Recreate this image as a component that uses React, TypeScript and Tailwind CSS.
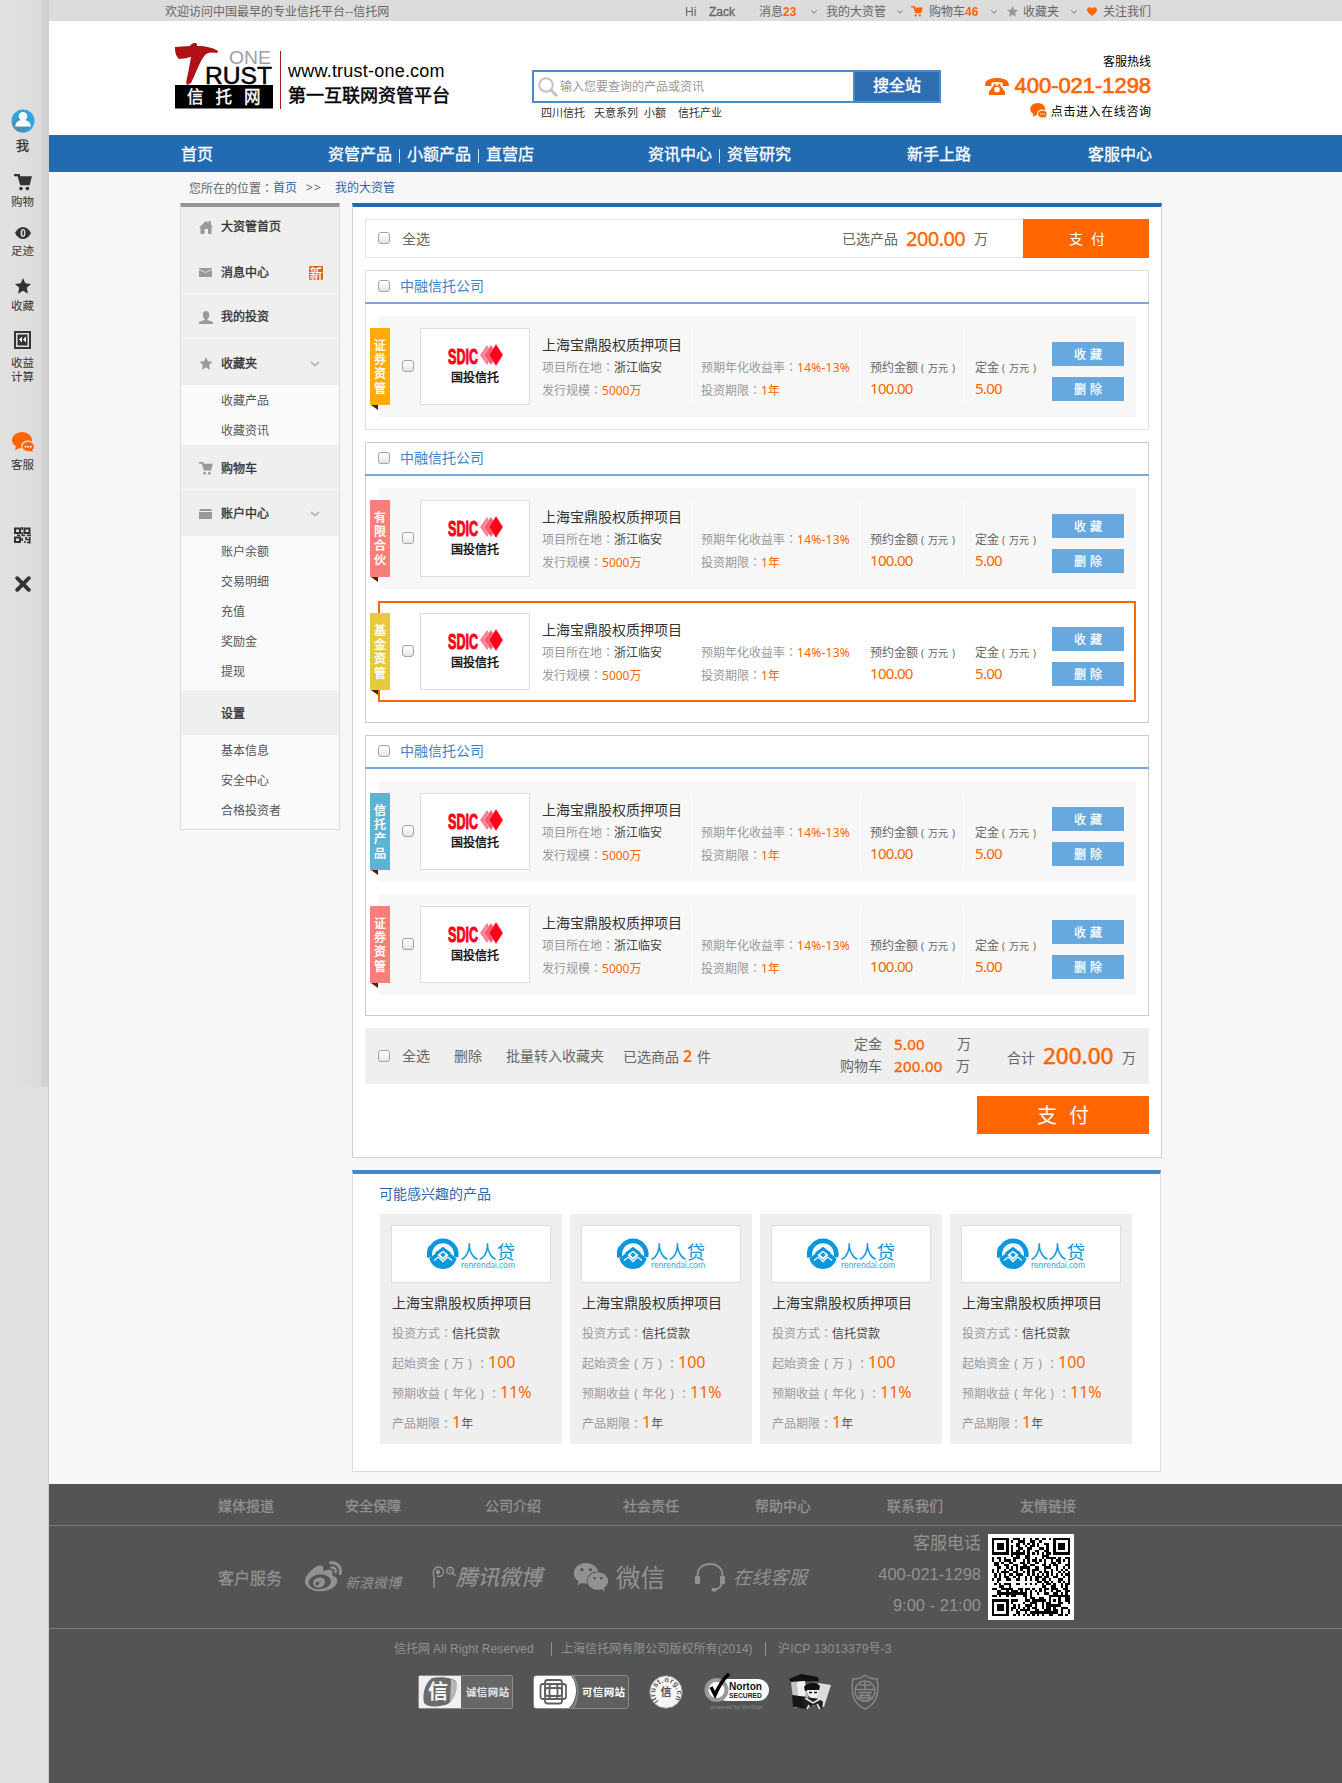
import React from "react";
import { FaWeibo, FaWeixin } from "react-icons/fa";

const Colon = () => <span className="font-['Noto_Sans_CJK_TC',sans-serif]">：</span>;

const CartIcon = ({ className }: { className: string }) => (
  <svg viewBox="0 0 18 17" className={className} fill="currentColor">
    <path d="M0 0h6v2.2h12l-2.4 9H6.2L3.6 2.2H0z" />
    <circle cx="7" cy="14.6" r="1.8" />
    <circle cx="13.4" cy="14.6" r="1.8" />
  </svg>
);

const StarIcon = ({ className }: { className: string }) => (
  <svg viewBox="0 0 16 16" className={className} fill="currentColor">
    <path d="M8 0l2.3 5.3 5.7.6-4.2 3.9 1.2 5.9L8 12.7l-5 3 1.2-5.9L0 5.900l5.700-.6z" />
  </svg>
);

const ChatIcon = ({ className }: { className: string }) => (
  <svg viewBox="0 0 22 20" className={className}>
    <path fill="#ff6600" d="M10 0c5.700 0 10 3.700 10 8.300l-.1 1.500C18.900 9 17.500 8.600 16 8.600c-3.600 0-6.800 2.300-6.800 5.600l.1 2.200-2.100-.2-4 2 .6-3.900C1.500 12.700 0 10.700 0 8.300 0 3.700 4.400 0 10 0z" />
    <path fill="#ff6600" d="M16.200 10c3.300 0 5.800 2 5.800 4.600 0 1.400-.7 2.600-1.700 3.400l.3 2-2.300-.9c-4.400.9-7.900-1.400-7.900-4.500 0-2.600 2.500-4.600 5.800-4.600z" />
    <path stroke="#fff" strokeWidth="1.500" strokeDasharray="1.700 .9" d="M12.800 14.700h7" />
  </svg>
);

const Chevron = () => (
  <svg viewBox="0 0 6 4" className="h-1 w-1.5" fill="none" stroke="#777" strokeWidth="1">
    <path d="M.5.5L3 3.200 5.500.5" />
  </svg>
);

const Check = ({ className = "" }: { className?: string }) => (
  <span className={"block h-3 w-3 shrink-0 rounded-[3px] border border-[#a3a3a3] bg-linear-to-b from-white via-[#f4f4f4] to-[#e4e4e4] " + className} />
);

/* ---------- Left tool strip ---------- */

const Strip = () => (
  <aside className="flex w-[49px] shrink-0 flex-col bg-[#e0e0e0]">
    <div className="flex h-[1087px] flex-col bg-[linear-gradient(to_right,#e2e2e2_0%,#dcdcdc_80%,#d4d4d4_86%,#cfcfcf_100%)] text-[11.500px] leading-[14px] text-[#333]">
      <div className="flex w-[45px] flex-col items-center pt-[109px]">
        <svg viewBox="0 0 24 24" className="h-6 w-6">
          <circle cx="12" cy="12" r="11.500" fill="#2fa5dd" />
          <path d="M1 14l9-8 8 12-5 5.400C7 23.700 2 20 1 14z" fill="#4790bd" />
          <circle cx="12" cy="7.200" r="4.300" fill="#fff" />
          <path d="M4.300 17.500c0-4 2.600-6.500 7.700-6.500s7.700 2.500 7.700 6.500z" fill="#fff" />
        </svg>
        <span className="mt-[5px] text-[13px] [-webkit-text-stroke:0.300px_#333]">我</span>
        <CartIcon className="mt-[22px] h-[17px] w-[18px]" />
        <span className="mt-1">购物</span>
        <svg viewBox="0 0 16 12" className="mt-[18px] h-3 w-4">
          <path d="M0 6c2-4 5-6 8-6s6 2 8 6c-2 4-5 6-8 6S2 10 0 6z" fill="#333" />
          <ellipse cx="8" cy="6" rx="2.400" ry="4" fill="#e0e0e0" />
          <ellipse cx="8.200" cy="6" rx=".9" ry="3" fill="#333" />
        </svg>
        <span className="mt-[5px]">足迹</span>
        <StarIcon className="mt-5 h-4 w-4" />
        <span className="mt-[5px]">收藏</span>
        <svg viewBox="0 0 17 18" className="mt-[18px] h-[18px] w-[17px]">
          <path d="M1 1h15v16H1z" fill="none" stroke="#333" strokeWidth="2" />
          <path d="M3.500 3.500h10v11h-10z" fill="#333" />
          <path d="M8 5.500v6L5 8.500zM12 5.500v6l-3-3z" fill="#fff" />
        </svg>
        <span className="mt-[7px]">收益</span>
        <span>计算</span>
        <ChatIcon className="mt-[48px] h-5 w-[22px]" />
        <span className="mt-[6px]">客服</span>
        <svg viewBox="0 0 17 17" className="mt-[55px] h-[17px] w-[17px]" fill="none" stroke="#333" strokeWidth="2">
          <path d="M1 1.500h5v4.500H1zM10.500 1.500h5v4.500h-5zM1 10.500h5v4.500H1z" />
          <path d="M8.200 0v3M8.200 5v3.500h3M8.200 11v3M3 8.300h3M13 8.300h4M10 15h2M12 10v3M15.700 10v6.500M12 12.500h4M13 15.500h3" strokeWidth="1.700" />
        </svg>
        <svg viewBox="0 0 16 16" className="mt-8 h-4 w-4" stroke="#333" strokeWidth="3.800" strokeLinecap="round">
          <path d="M2.200 2.200l11.600 11.600M13.800 2.200L2.200 13.800" />
        </svg>
      </div>
    </div>
    <div className="flex-1 border-r border-[#cfcfcf]" />
  </aside>
);

/* ---------- Header ---------- */

const TopBar = () => (
  <div className="flex h-[21px] items-center bg-[#dcdcdc] pl-[116px] text-xs leading-[20px] text-[#666]">
    <span className="w-[520px] font-['Noto_Sans_CJK_SC',sans-serif]">欢迎访问中国最早的专业信托平台--信托网</span>
    <div className="flex items-center whitespace-nowrap pt-0.5 font-['Liberation_Sans','Noto_Sans_CJK_SC',sans-serif]">
      <span className="w-6">Hi</span>
      <span className="w-[50px] [-webkit-text-stroke:0.300px_#666]">Zack</span>
      <span className="w-[52px]">消息<b className="text-[#ff6600]">23</b></span>
      <span className="w-[15px]"><Chevron /></span>
      <span className="w-[71px]">我的大资管</span>
      <span className="w-3.5"><Chevron /></span>
      <CartIcon className="mr-1.5 h-[11px] w-3 text-[#ff6600]" />
      <span className="w-[62px]">购物车<b className="text-[#ff6600]">46</b></span>
      <span className="w-4"><Chevron /></span>
      <StarIcon className="mr-[5px] h-[11px] w-[11px] text-[#999]" />
      <span className="w-[48px]">收藏夹</span>
      <span className="w-4"><Chevron /></span>
      <svg viewBox="0 0 10 9" className="mr-[6px] h-[9px] w-2.5" fill="#ff6600">
        <path d="M5 9C2 6.500 0 5 0 2.600 0 0 3.500-.8 5 1.500 6.500-.8 10 0 10 2.600 10 5 8 6.500 5 9z" />
      </svg>
      <span>关注我们</span>
    </div>
  </div>
);

const Logo = () => (
  <svg viewBox="0 0 98 66" className="h-[66px] w-[98px] font-['Liberation_Sans','Noto_Sans_CJK_SC',sans-serif]">
    <path d="M0 4l15-1c2-3 5-4 7-2v2c9 0 17 2 21 5l-1 2c-5-1-9-1-12 2-5 6-9 18-14 28l-4 2c-1-2-1-3 0-7 2-9 3-16 4-21-5 1-9 2-12 2C1 13 0 10 0 4z" fill="#b01116" />
    <text x="54" y="20.500" fontSize="18" textLength="42" lengthAdjust="spacingAndGlyphs" fill="#a0a0a0">ONE</text>
    <text x="30" y="40.500" fontSize="24" textLength="67" lengthAdjust="spacingAndGlyphs" fill="#000" stroke="#000" strokeWidth=".5">RUST</text>
    <path d="M0 42h98v23.500H0z" fill="#000" />
    <text x="12" y="59.500" fontSize="16.500" letterSpacing="12" fill="#fff" stroke="#fff" strokeWidth=".4">信托网</text>
  </svg>
);

const Header = () => (
  <header className="flex h-[114px] items-start whitespace-nowrap bg-white">
    <div className="ml-[126px] mt-[22px]"><Logo /></div>
    <div className="ml-[7px] mt-[30px] h-[58px] w-px bg-[#a61c1c]" />
    <div className="ml-[7px] mt-[38px] w-[244px] font-['Liberation_Sans','Noto_Sans_CJK_SC',sans-serif] text-black">
      <div className="text-[18px] leading-6 tracking-[0.220px]">www.trust-one.com</div>
      <div className="text-[18px] leading-[26px] [-webkit-text-stroke:0.500px_#000]">第一互联网资管平台</div>
    </div>
    <div className="mt-[49px] w-[409px]">
      <div className="flex h-[33px] border-2 border-[#4c8bc9]">
        <div className="flex flex-1 items-center pl-1">
          <svg viewBox="0 0 20 20" className="h-5 w-5" fill="none" stroke="#c4c4c4">
            <circle cx="8" cy="8" r="6.800" strokeWidth="2" />
            <path d="M13 13l6 6" strokeWidth="3" />
          </svg>
          <span className="ml-0.5 text-xs text-[#999]">输入您要查询的产品或资讯</span>
        </div>
        <div className="flex w-[86px] items-center justify-center border-l-2 border-[#4c8bc9] bg-[#2f6db1] pb-1 text-base text-white [-webkit-text-stroke:0.400px_#fff]">搜全站</div>
      </div>
      <div className="flex whitespace-pre pl-[9px] text-[11px] leading-5 text-[#333]">
        <span className="w-[53px]">四川信托</span>
        <span className="w-[50px]">天意系列</span>
        <span className="w-[34px]">小额</span>
        <span>信托产业</span>
      </div>
    </div>
    <div className="mt-[32px] ml-[43px] flex w-[167px] flex-col items-end text-xs leading-[18px] text-black">
      <span>客服热线</span>
      <div className="mt-0.5 flex items-center text-[#ff6600]">
        <svg viewBox="0 0 25 18" className="mr-[6px] h-[17px] w-6 shrink-0" fill="#ff6600">
          <path d="M0 6.500C0 2.500 5 0 12.500 0S25 2.500 25 6.500V8.500h-6.500V5C15 4 10 4 6.500 5v3.500H0z" />
          <path fillRule="evenodd" d="M9 6h1.800v2h3.400V6H16v2l5 6.500V18H4v-3.500L9 8zM12.500 9.200a3 3 0 100 6 3 3 0 000-6z" />
        </svg>
        <span className="font-['Liberation_Sans',sans-serif] text-[22px] leading-[26px] tracking-[-0.050px] [-webkit-text-stroke:0.700px_#ff6600]">400-021-1298</span>
      </div>
      <div className="mt-1 flex items-center">
        <ChatIcon className="mr-1 -mt-1 h-[15px] w-[17px]" />
        <span className="-mr-[0.600px] tracking-[0.600px]">点击进入在线咨询</span>
      </div>
    </div>
  </header>
);

const Bar = () => <i className="mx-[7px] mt-1 h-3.5 w-px bg-[#d7e4f1]" />;

const Nav = () => (
  <nav className="flex h-[37px] items-center whitespace-nowrap bg-[#236bb1] pl-[132px] text-base leading-none text-white [-webkit-text-stroke:0.300px_#fff]">
    <span className="w-[147px]">首页</span>
    <div className="flex w-[320px] items-center">资管产品<Bar />小额产品<Bar />直营店</div>
    <div className="flex w-[259px] items-center">资讯中心<Bar />资管研究</div>
    <span className="w-[181px]">新手上路</span>
    <span>客服中心</span>
  </nav>
);

/* ---------- Sidebar ---------- */

const DownArrow = () => (
  <svg viewBox="0 0 10 6" className="mr-[19px] ml-auto h-1.5 w-2.5" fill="none" stroke="#bbb" strokeWidth="2">
    <path d="M1 1l4 3.500L9 1" />
  </svg>
);

const MenuHead = ({ icon, label, tail, className }: { icon?: React.ReactNode; label: string; tail?: React.ReactNode; className: string }) => (
  <div className={"flex items-center bg-[#efefef] pl-[18px] text-xs text-[#333] [-webkit-text-stroke:0.350px_#333] " + className}>
    <span className="w-[22px] text-[#999]">{icon}</span>
    <span>{label}</span>
    {tail}
  </div>
);

const Sub = ({ items, className }: { items: string[]; className: string }) => (
  <div className={"flex flex-col bg-[#fafafa] pl-10 text-xs leading-[30px] text-[#555] " + className}>
    {items.map((t) => <span key={t}>{t}</span>)}
  </div>
);

const Sidebar = () => (
  <aside className="h-[627px] w-40 shrink-0 border border-t-4 border-[#dcdcdc] border-t-[#969696] bg-[#efefef]">
    <MenuHead className="h-10" label="大资管首页" icon={<svg viewBox="0 0 14 14" className="h-3.5 w-3.5" fill="currentColor"><path d="M7 1l2.500 2V1H12v4l2 2.500h-1.500V14H9V9H5.500v5H1.500V7.500H0z" /></svg>} />
    <MenuHead className="h-[47px] border-b border-[#f8f8f8] pt-1.5" label="消息中心" icon={<svg viewBox="0 0 13 9" className="-mt-0.5 h-[9px] w-[13px]" fill="currentColor"><path d="M0 0h13v9H0z" /><path d="M0 1.500L6.500 4.500 13 1.500" fill="none" stroke="#ddd" /></svg>}
      tail={<span className="mr-4 ml-auto flex h-3.5 w-3.5 items-center justify-center rounded-[1px] bg-[#e06416] text-[13px] leading-none text-white [-webkit-text-stroke:0.200px_#fff]">新</span>} />
    <MenuHead className="h-[45px] border-b border-[#f8f8f8] pt-0.5" label="我的投资" icon={<svg viewBox="0 0 14 13" className="h-[13px] w-3.5" fill="currentColor"><ellipse cx="7" cy="4" rx="3.200" ry="4" /><path d="M5.500 7h3v2l5.500 2v2H0v-2l5.500-2z" /></svg>} />
    <MenuHead className="h-[46px] pt-[3px]" label="收藏夹" icon={<StarIcon className="h-[13px] w-3.5" />} tail={<DownArrow />} />
    <Sub className="h-[60px] pt-px" items={["收藏产品", "收藏资讯"]} />
    <MenuHead className="h-[45px] border-b border-[#f8f8f8] pt-[3px]" label="购物车" icon={<CartIcon className="-mt-px h-[13px] w-3.5" />} />
    <MenuHead className="h-[46px] pt-0.5" label="账户中心" icon={<svg viewBox="0 0 13 10" className="h-2.5 w-[13px]" fill="currentColor"><path d="M1 0h11l1 2H0zM0 3h13v7H0z" /></svg>} tail={<DownArrow />} />
    <Sub className="h-[154px] pt-px" items={["账户余额", "交易明细", "充值", "奖励金", "提现"]} />
    <MenuHead className="h-[45px] pt-0.5" label="设置" />
    <Sub className="h-[94px] pt-px" items={["基本信息", "安全中心", "合格投资者"]} />
  </aside>
);

/* ---------- Cart ---------- */

const SdicLogo = () => (
  <div className="flex flex-col items-center text-black">
    <svg viewBox="0 -4 56 30" className="h-[30px] w-14 font-['Liberation_Sans',sans-serif]">
      <text x="1" y="19.500" fontSize="22" fontWeight="700" textLength="30" lengthAdjust="spacingAndGlyphs" fill="#ff0019" stroke="#ff0019" strokeWidth="1">SDIC</text>
      <path d="M40 1l6.500 10-6.500 10-7-10z" fill="#ff8195" />
      <path d="M44 1l6.500 10-6.500 10-7-10z" fill="#ff5570" stroke="#ffc9d1" strokeWidth=".5" />
      <path d="M49 0l7 11-7 11-7-11z" fill="#ff0019" stroke="#ffc9d1" strokeWidth=".4" />
    </svg>
    <span className="text-xs leading-4 [-webkit-text-stroke:0.400px_#111]">国投信托</span>
  </div>
);

const BlueButton = ({ a, b }: { a: string; b: string }) => (
  <div className="flex h-6 w-[72px] items-center justify-center gap-1 bg-[#67a8de] pt-0.5 text-xs leading-none text-white [-webkit-text-stroke:0.250px_#fff]">
    <span>{a}</span><span>{b}</span>
  </div>
);

const Unit = () => <span className="ml-[3px] flex w-[34px] justify-between text-[10px]"><span>(</span><span>万元</span><span>)</span></span>;

const Split = () => <div className="mt-3 h-[77px] w-px bg-white" />;

const Product = ({ tag, color, active }: { tag: string; color: string; active?: boolean }) => (
  <div className={"relative mx-3 flex h-[101px] items-start whitespace-nowrap text-xs text-[#999] " + (active ? "bg-white ring-2 ring-[#ff6600] ring-inset" : "bg-[#f7f7f7]")}>
    <div className="absolute top-3 -left-2">
      <div className={"flex h-[77px] w-5 flex-col items-center pt-[11px] text-xs leading-[14.200px] text-white [-webkit-text-stroke:0.400px_#fff] " + color}>
        {tag.split("").map((c) => <span key={c}>{c}</span>)}
      </div>
      <svg viewBox="0 0 8 5" className="h-[5px] w-2" fill="#4c2500"><path d="M1 0h7v5z" /></svg>
    </div>
    <Check className="mt-11 ml-6" />
    <div className="mt-3 ml-1.5 flex h-[77px] w-[110px] items-start justify-center border border-[#ddd] bg-white pt-[11px]"><SdicLogo /></div>
    <div className="ml-3 w-[149px] pt-[18px]">
      <div className="text-sm leading-[22px] text-[#333]">上海宝鼎股权质押项目</div>
      <div className="leading-[22px]">项目所在地<Colon /><span className="text-[#444]">浙江临安</span></div>
      <div className="leading-[22px]">发行规模<Colon /><span className="text-[#ff6600]">5000万</span></div>
    </div>
    <Split />
    <div className="ml-[9px] w-[159px] pt-10">
      <div className="leading-[22px]">预期年化收益率<Colon /><span className="tracking-[0.250px] text-[#ff6600]">14%-13%</span></div>
      <div className="leading-[22px]">投资期限<Colon /><span className="text-[#ff6600]">1年</span></div>
    </div>
    <Split />
    <div className="ml-[9px] w-[93px] pt-10 text-[#666]">
      <div className="flex leading-6">预约金额<Unit /></div>
      <div className="text-[15px] leading-4 tracking-[-0.700px] text-[#ff6600]">100.00</div>
    </div>
    <Split />
    <div className="ml-[11px] w-[77px] pt-10 text-[#666]">
      <div className="flex leading-6">定金<Unit /></div>
      <div className="text-[15px] leading-4 tracking-[-0.700px] text-[#ff6600]">5.00</div>
    </div>
    <div className="mt-[26px] flex flex-col gap-[11px]">
      <BlueButton a="收" b="藏" />
      <BlueButton a="删" b="除" />
    </div>
  </div>
);

const Group = ({ className, children }: { className: string; children: React.ReactNode }) => (
  <section className={"mt-3 border " + className}>
    <div className="-mx-px flex h-[33px] items-center border-b-2 border-[#79a8dc] pl-[13px]">
      <Check className="-mt-px" />
      <span className="ml-2.5 pb-0.5 text-sm leading-none text-[#3b86cc]">中融信托公司</span>
    </div>
    <div className="mt-3 flex flex-col gap-3">{children}</div>
  </section>
);

const Cart = () => (
  <main className="h-[955px] w-[810px] border border-t-4 border-[#d0d0d0] border-t-[#236bb1] bg-white px-3 pt-3 text-[#666]">
    <div className="flex h-[39px] w-[784px] items-center border border-[#e3e3e3] pl-3 text-sm leading-none">
      <Check className="-mt-0.5" />
      <span className="ml-3 w-[440px]">全选</span>
      <span className="pt-px">已选产品</span>
      <span className="ml-2 w-[68px] text-[20px] tracking-[-0.550px] text-[#ff6600] [-webkit-text-stroke:0.300px_#ff6600]">200.00</span>
      <span className="pt-px">万</span>
      <div className="-my-px -mr-px ml-auto flex h-[39px] w-[126px] items-center justify-center gap-2 bg-[#ff6600] pt-px pl-0.5 text-sm text-white"><span>支</span><span>付</span></div>
    </div>
    <div className="w-[784px]">
      <Group className="h-40 border-[#e0e0e0]">
        <Product tag="证券资管" color="bg-[#ffab0a]" />
      </Group>
      <Group className="h-[281px] border-[#cccccc]">
        <Product tag="有限合伙" color="bg-[#f77e7b]" />
        <Product tag="基金资管" color="bg-[#e6ca3b]" active />
      </Group>
      <Group className="h-[281px] border-[#cccccc]">
        <Product tag="信托产品" color="bg-[#5cb3d3]" />
        <Product tag="证券资管" color="bg-[#f77e7b]" />
      </Group>
    </div>
    <div className="mt-3 flex h-14 w-[784px] items-center whitespace-nowrap bg-[#efefef] pl-[13px] text-sm leading-none">
      <Check />
      <span className="ml-3 w-[52px]">全选</span>
      <span className="w-[52px]">删除</span>
      <span className="w-[117px]">批量转入收藏夹</span>
      <span className="pt-0.5">已选商品</span>
      <b className="ml-1 w-3.5 text-base font-semibold text-[#ff6600]">2</b>
      <span className="pt-0.5">件</span>
      <div className="-mt-0.5 ml-[129px] w-[42px] text-right leading-[22px]"><div>定金</div><div>购物车</div></div>
      <div className="-mt-0.5 ml-3 w-[62px] text-[15px] leading-[22px] tracking-[0.300px] text-[#ff6600] [-webkit-text-stroke:0.400px_#ff6600]"><div>5.00</div><div>200.00</div></div>
      <div className="-mt-0.5 w-[51px] leading-[22px]"><div className="pl-px">万</div><div>万</div></div>
      <span className="pt-1">合计</span>
      <span className="ml-2 w-[79px] text-[22.500px] text-[#ff6600] [-webkit-text-stroke:0.600px_#ff6600]">200.00</span>
      <span className="pt-1">万</span>
    </div>
    <div className="mt-3 ml-[612px] flex h-[38px] w-[172px] items-center justify-center gap-3 bg-[#ff6600] pt-0.5 text-xl leading-none text-white"><span>支</span><span>付</span></div>
  </main>
);

/* ---------- Suggestions ---------- */

const RenrenLogo = () => (
  <svg viewBox="0 0 90 36" className="h-9 w-[90px]">
    <path d="M2.600 19.500A13.700 13.700 0 0 1 4 9M3 19a13.300 13.300 0 1 1 26 0" fill="none" stroke="#0b97dd" strokeWidth="4.600" />
    <path d="M2.300 20.500l6.500-5.300 7.200 6.700 7.200-6.700 6.500 5.300c-2 6.500-7.200 10.500-13.700 10.500S4.300 27 2.300 20.500z" fill="#0b97dd" />
    <path d="M8 14.800l8-6 8 6-2 2.400-6-4.400-6 4.400z" fill="#0b97dd" />
    <path d="M16 14.200l2.800 2.600-2.800 2.600-2.800-2.600z" fill="#0b97dd" />
    <path d="M7 22.500l4.300-3.500 4.700 4.600 4.700-4.600 4.300 3.500" fill="none" stroke="#fff" strokeWidth="1.200" />
    <text x="33" y="20.500" fontSize="18.500" textLength="55" lengthAdjust="spacingAndGlyphs" fill="#0b97dd" className="font-['Noto_Sans_CJK_SC',sans-serif]">人人贷</text>
    <text x="34" y="29.500" fontSize="8.500" textLength="54" lengthAdjust="spacingAndGlyphs" fill="#35a9e2" className="font-['Lato',sans-serif]">renrendai.com</text>
  </svg>
);

const Card = () => (
  <div className="h-[230px] w-[182px] bg-[#efefef] pt-[11px] pl-[11px] text-xs text-[#999]">
    <div className="flex h-[58px] w-40 items-center justify-center border border-[#ddd] bg-white pt-1 pl-px"><RenrenLogo /></div>
    <div className="mt-1.5 pl-px">
      <div className="text-sm leading-7 text-[#333]">上海宝鼎股权质押项目</div>
      <div className="mt-px leading-[30px]">投资方式<Colon /><span className="text-[#444]">信托贷款</span></div>
      <div className="flex h-[30px] items-center leading-[30px]">起始资金<span className="w-3 text-center">(</span>万<span className="w-3 text-center">)</span><Colon /><span className="-mt-1 text-base text-[#ff6600]">100</span></div>
      <div className="flex h-[30px] items-center leading-[30px]">预期收益<span className="w-3 text-center">(</span>年化<span className="w-3 text-center">)</span><Colon /><span className="-mt-1 text-base text-[#ff6600]">11%</span></div>
      <div className="flex h-[30px] items-center leading-[30px]">产品期限<Colon /><span className="-mt-1 text-base text-[#ff6600]">1</span><span className="text-[#555]">年</span></div>
    </div>
  </div>
);

const Suggestions = () => (
  <section className="mt-3 h-[302px] w-[809px] border border-t-4 border-[#dcdcdc] border-t-[#3f88ce] bg-white pl-[27px]">
    <div className="-ml-px h-10 pt-2.5 text-sm leading-5 text-[#2a68b0]">可能感兴趣的产品</div>
    <div className="flex gap-2"><Card /><Card /><Card /><Card /></div>
  </section>
);

/* ---------- Footer ---------- */

const QR = () => {
  const n = 33;
  const cells: string[] = [];
  const finder = (x: number, y: number, ox: number, oy: number) => {
    const d = Math.max(Math.abs(x - ox - 3), Math.abs(y - oy - 3));
    return d <= 4 ? (d === 3 || d <= 1 ? 1 : 0) : -1;
  };
  let seed = 20141;
  for (let y = 0; y < n; y++)
    for (let x = 0; x < n; x++) {
      seed = (seed * 1103515245 + 12345) % 2147483648;
      let v = (seed >> 12) & 1;
      for (const [ox, oy] of [[0, 0], [26, 0], [0, 26]]) {
        const f = finder(x, y, ox, oy);
        if (f >= 0) v = f;
      }
      const a = Math.max(Math.abs(x - 26), Math.abs(y - 26));
      if (a <= 2) v = a === 1 ? 0 : 1;
      if (v) cells.push(`M${x} ${y}h1v1h-1z`);
    }
  return (
    <svg viewBox="-1.700 -1.700 36.400 36.400" className="h-[86px] w-[86px] bg-white" fill="#000" shapeRendering="crispEdges">
      <path d={cells.join("")} />
    </svg>
  );
};

const Badges = () => (
  <div className="mt-0.5 ml-[369px] flex h-[38px] items-center font-['Noto_Sans_CJK_SC',sans-serif]">
    <svg viewBox="0 0 95 34" className="h-[34px] w-[95px]">
      <rect x=".5" y=".5" width="94" height="33" rx="1.500" fill="#666" stroke="#8c8c8c" />
      <path d="M1 1h42v32H1z" fill="#f0f0f0" />
      <path d="M14 3c10-2 20 0 24 3 0 10-2 18-8 23-8 3-20 4-24-1-2-9 1-20 8-25z" fill="#6b6b6b" />
      <path d="M33 4l6 3c0 9-2 16-7 20z" fill="#b5b5b5" />
      <text x="10" y="24" fontSize="20" fontWeight="700" fill="#f4f4f4">信</text>
      <text x="48" y="21" fontSize="10.500" fontWeight="700" textLength="43" fill="#e6e6e6">诚信网站</text>
    </svg>
    <svg viewBox="0 0 96 34" className="ml-5 h-[34px] w-24">
      <rect x=".5" y=".5" width="95" height="33" rx="3" fill="#5f5f5f" stroke="#8c8c8c" />
      <path d="M38 1c8 9 8 23 0 32h3c6-9 6-23 0-32z" fill="#888" />
      <path d="M3 1h35c7 9 7 23-2 32H3c-1 0-2-1-2-2V3c0-1 1-2 2-2z" fill="#fff" />
      <g fill="none" stroke="#606060" strokeWidth="1.800">
        <rect x="12" y="5" width="17" height="16" rx="2.500" /><rect x="7.500" y="9" width="17" height="15" rx="2.500" />
        <rect x="16.500" y="9" width="16.500" height="15" rx="2.500" /><rect x="12" y="13" width="17" height="15.500" rx="2.500" />
      </g>
      <text x="49" y="21" fontSize="10.500" fontWeight="700" textLength="43" fill="#fff">可信网站</text>
    </svg>
    <svg viewBox="0 0 34 34" className="ml-5 h-[34px] w-[34px]">
      <circle cx="17" cy="17" r="16.300" fill="#f5f5f5" stroke="#888" />
      <path id="seal" d="M9.500 26.200A11 11 0 1 1 24.500 26.200" fill="none" />
      <text fontSize="7.500" fontWeight="700" fill="#555" className="font-['Liberation_Sans',sans-serif]"><textPath href="#seal" textLength="50">itrust.org.cn</textPath></text>
      <text x="11.500" y="21" fontSize="11" fontWeight="700" fill="#555">信</text>
    </svg>
    <svg viewBox="0 0 66 38" className="ml-[21px] h-[38px] w-[66px] font-['Liberation_Sans',sans-serif]">
      <rect x="12" y="6" width="53" height="22" rx="11" fill="#fff" />
      <circle cx="12.500" cy="17" r="10" fill="#fff" stroke="#999" strokeWidth="4" />
      <path d="M7 14l4 8C15 13 19 6 25 1" fill="none" stroke="#000" strokeWidth="3.500" />
      <text x="25" y="16.500" fontSize="10.500" fontWeight="700" textLength="33" lengthAdjust="spacingAndGlyphs" fill="#111">Norton</text>
      <text x="25" y="25" fontSize="7" fontWeight="700" textLength="33" lengthAdjust="spacingAndGlyphs" fill="#222">SECURED</text>
      <text x="6" y="36" fontSize="6" textLength="53" lengthAdjust="spacingAndGlyphs" fill="#8c8c8c">powered by VeriSign</text>
    </svg>
    <svg viewBox="0 0 42 36" className="ml-[19px] h-9 w-[42px]">
      <path d="M0 5L12 0l17 3 1 4-28 1z" fill="#111" />
      <path d="M2 8l14-1 5 27H5z" fill="#c4c4c4" />
      <path d="M8 8l8-1v15H9z" fill="#eee" />
      <path d="M3 21l15 2v12l-14-2z" fill="#161616" />
      <path d="M29 9l13 2-7 22-14-2z" fill="#dcdcdc" />
      <path d="M15 13c3-5 13-5 16-1l-1 4-14 1z" fill="#111" />
      <path d="M18 16h11c1 5-2 8-5 8s-6-2-6-8z" fill="#f2f2f2" />
      <path d="M13 27c4-4 17-4 21 1l-1 7-8-4-9 4z" fill="#222" />
      <path d="M16 24l8 5 7-4M20 31l-2 4M28 30l3 5" stroke="#eee" strokeWidth="1.500" fill="none" />
      <path d="M20 18.500h3M25 18.500h3" stroke="#111" strokeWidth="1.500" />
    </svg>
    <svg viewBox="0 0 28 36" className="ml-5 h-9 w-7" fill="none" stroke="#858585" strokeWidth="1.500">
      <path d="M14 1c3 3 8 4 12 4 2 11 2 24-12 30C0 29 0 16 2 5c4 0 9-1 12-4z" />
      <circle cx="14" cy="17" r="10" />
      <path d="M8 11h12M14 8v7M5 15.500h18M7 18.500h14M8 21.500h12M12 18c-1 4-3 6-6 7M16 18c1 4 3 6 6 7M11 24h6v3h-6z" />
    </svg>
  </div>
);

const Footer = () => (
  <footer className="mt-3 flex-1 whitespace-nowrap bg-[#545454] text-[#929292]">
    <div className="flex h-[42px] items-center border-b border-[#7c7c7c] pt-0.5 pl-[169px] text-sm leading-none [-webkit-text-stroke:0.300px_#929292]">
      <span className="w-[127px]">媒体报道</span>
      <span className="w-[140px]">安全保障</span>
      <span className="w-[138px]">公司介绍</span>
      <span className="w-[132px]">社会责任</span>
      <span className="w-[132px]">帮助中心</span>
      <span className="w-[133px]">联系我们</span>
      <span>友情链接</span>
    </div>
    <div className="flex h-[103px] items-center border-b border-[#7c7c7c] pl-[169px] leading-none">
      <span className="w-[87px] pt-0.5 text-base [-webkit-text-stroke:0.300px_#929292]">客户服务</span>
      <FaWeibo className="h-[37px] w-[37px]" />
      <span className="ml-[3px] w-[87px] pt-3 text-sm italic">新浪微博</span>
      <svg viewBox="0 0 24 22" className="h-[22px] w-6" fill="none" stroke="#929292" strokeWidth="1.400">
        <path d="M2 22V11M2 11C0 5 3 1 6.500 1S12 4 11.500 7 8 11 5 10" />
        <circle cx="6" cy="6" r="2.200" fill="#929292" stroke="none" />
        <circle cx="18" cy="4.500" r="3.200" /><circle cx="18" cy="4.500" r="1" fill="#929292" stroke="none" />
        <path d="M20.500 6.500C21 8 22 9 23.500 9.500" />
      </svg>
      <span className="w-[117px] text-[21.500px] italic [-webkit-text-stroke:0.300px_#929292]">腾讯微博</span>
      <FaWeixin className="h-9 w-9" />
      <span className="ml-[7px] w-[79px] pt-0.5 text-[24.500px]">微信</span>
      <svg viewBox="0 0 30 29" className="h-[29px] w-[30px]" fill="none" stroke="#929292" strokeWidth="1.800">
        <path d="M2.500 14C2 5 8 1 15 1s13 4 12.500 13M27 20c-1 4-3 6-7 6.500" />
        <rect x="0" y="13" width="5" height="8" rx="1" fill="#929292" stroke="none" />
        <rect x="25" y="13" width="5" height="8" rx="1" fill="#929292" stroke="none" />
        <rect x="16.500" y="25" width="5" height="3.500" rx="1.500" fill="#929292" stroke="none" />
      </svg>
      <span className="ml-2 w-[137px] text-[18.500px] italic">在线客服</span>
      <div className="-mt-[5px] flex w-[111px] flex-col items-end font-['Liberation_Sans','Noto_Sans_CJK_SC',sans-serif] text-[17px] leading-[31px]">
        <span>客服电话</span>
        <span className="text-[16.500px]">400-021-1298</span>
        <span className="text-[16.500px]">9:00 - 21:00</span>
      </div>
      <div className="ml-[7px]"><QR /></div>
    </div>
    <div className="flex h-10 items-center pl-[345px] font-['Liberation_Sans','Noto_Sans_CJK_SC',sans-serif] text-xs leading-none">
      <span>信托网</span>
      <span className="ml-[3px] w-[118px] tracking-[0.080px]">All Right Reserved</span>
      <i className="mr-[9px] h-3.5 w-px bg-[#929292]" />
      <span className="w-[204px] tracking-[0.050px]">上海信托网有限公司版权所有(2014)</span>
      <i className="mr-3 h-3.5 w-px bg-[#929292]" />
      <span className="tracking-[0.150px]">沪ICP 13013379号-3</span>
    </div>
    <div className="pt-0.5"><Badges /></div>
  </footer>
);

export default function App() {
  return (
    <div className="flex h-[1783px] w-[1342px] overflow-hidden bg-[#f7f7f7] font-['Noto_Sans','Noto_Sans_CJK_SC',sans-serif]">
      <Strip />
      <div className="flex min-w-0 flex-1 flex-col">
        <TopBar />
        <Header />
        <Nav />
        <div className="flex h-[31px] items-center pt-px pl-[140px] text-xs leading-none text-[#666]">
          <span>您所在的位置<Colon /></span>
          <span className="text-[#2a68b0]">首页</span>
          <span className="ml-[9px] w-[29px] tracking-[1px]">&gt;&gt;</span>
          <span className="text-[#2a68b0]">我的大资管</span>
        </div>
        <div className="flex pl-[131px]">
          <Sidebar />
          <div className="ml-3">
            <Cart />
            <Suggestions />
          </div>
        </div>
        <Footer />
      </div>
    </div>
  );
}
